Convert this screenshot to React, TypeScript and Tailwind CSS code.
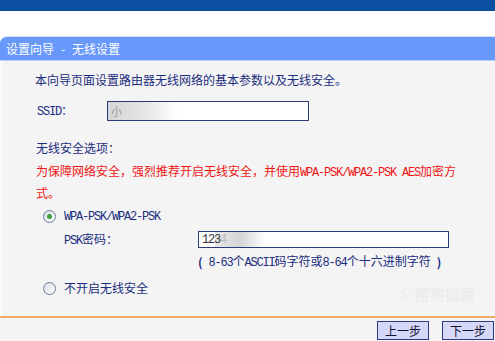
import React from "react";

const CN = { fontFamily: '"Noto Sans CJK SC", "Noto Sans", sans-serif' };
const MONO = { fontFamily: '"Liberation Mono", "DejaVu Sans Mono", monospace' };

function A({ children }: { children: React.ReactNode }) {
  return (
    <span style={MONO} className="text-[12px] tracking-[-1.2px]">
      {children}
    </span>
  );
}

function Radio({ checked }: { checked?: boolean }) {
  return (
    <span className="flex h-[13px] w-[13px] items-center justify-center rounded-full border border-[#6b7b95] bg-gradient-to-br from-[#d8dde6] to-[#ffffff]">
      {checked && <span className="h-[5px] w-[5px] rounded-full bg-[#3aa13a]" />}
    </span>
  );
}

function Btn({ label }: { label: string }) {
  return (
    <button className="flex h-[19px] w-[52px] items-center justify-center border border-[#2d3b86] bg-[#d6d8f8] text-[12px] leading-none text-[#111133]">
      {label}
    </button>
  );
}

export default function App() {
  return (
    <div style={CN} className="relative h-[341px] w-[495px] overflow-hidden bg-white text-[12px]">
      <div className="h-[11px] bg-[#0b4fa1]" />
      <div className="h-[25px] bg-white" />
      <div className="flex h-[25px] items-center rounded-tl-[7px] border-t border-b border-t-[#d3e2ff] border-b-[#b7cdf6] bg-[#6898fa] pl-[6px] text-[12px] text-white">
        <span>设置向导</span>
        <span className="mx-[6px] w-[6px] text-center">-</span>
        <span>无线设置</span>
      </div>
      <div className="flex h-[255px] flex-col border-l-2 border-[#fbfbfb] bg-[#f4f4f4] pl-[33px] text-[#1b2d80]">
        <div className="mt-[9px] flex h-[20px] items-center">本向导页面设置路由器无线网络的基本参数以及无线安全。</div>
        <div className="mt-[11px] flex h-[20px] items-center">
          <span className="w-[72px] pl-[2px]">
            <A>SSID</A>：
          </span>
          <div className="relative flex h-[20px] w-[202px] items-center overflow-hidden border border-[#2c3a7a] bg-white pl-[3px]">
            <div className="absolute left-0 top-0 h-full w-[70px] bg-gradient-to-r from-[#d6d6d6] via-[#e4e4e4] to-white" />
            <span className="relative text-[11px] text-[#9a9a9a]">小</span>
          </div>
        </div>
        <div className="mt-[17px] flex h-[20px] items-center pl-[1px]">无线安全选项：</div>
        <div className="mt-[3px] whitespace-nowrap pl-[1px] text-[12px] leading-[20px] text-[#f01414]">
          为保障网络安全，强烈推荐开启无线安全，并使用<A>WPA-PSK/WPA2-PSK AES</A>加密方
          <br />
          式。
        </div>
        <div className="mt-[3px] flex h-[20px] items-center pl-[8px]">
          <Radio checked />
          <span className="ml-[8px]">
            <A>WPA-PSK/WPA2-PSK</A>
          </span>
        </div>
        <div className="mt-[5px] flex h-[17px] items-center pl-[29px]">
          <span className="w-[134px]">
            <A>PSK</A>密码：
          </span>
          <div className="relative flex h-[17px] w-[251px] items-center overflow-hidden border border-[#2c3a7a] bg-white pl-[3px]">
            <div className="absolute left-[16px] top-0 h-full w-[50px] bg-gradient-to-r from-[#e8e8e8] via-[#d4d4d4] to-white" />
            <span className="relative text-[11px] text-[#333]">
              <A>123</A>
              <span className="text-[#bbb]">
                <A>4</A>
              </span>
            </span>
          </div>
        </div>
        <div className="mt-[4px] flex h-[20px] items-center pl-[163px]">
          <span className="font-bold">(</span>
          <span className="ml-[6px]">
            <A>8-63</A>个<A>ASCII</A>码字符或<A>8-64</A>个十六进制字符
          </span>
          <span className="ml-[6px] font-bold">)</span>
        </div>
        <div className="mt-[6px] flex h-[20px] items-center pl-[8px]">
          <Radio />
          <span className="ml-[8px]">不开启无线安全</span>
        </div>
      </div>
      <div className="h-[2px] bg-[#f3a866]" />
      <div className="flex h-[23px] items-start justify-end gap-[13px] bg-[#f4f4f4] pr-[1px] pt-[3px]">
        <Btn label="上一步" />
        <Btn label="下一步" />
      </div>
      <div className="pointer-events-none absolute left-[396px] top-[283px] text-[15px] font-bold text-[#ececec]">
        Ⓢ 搜狗指南
      </div>
    </div>
  );
}
